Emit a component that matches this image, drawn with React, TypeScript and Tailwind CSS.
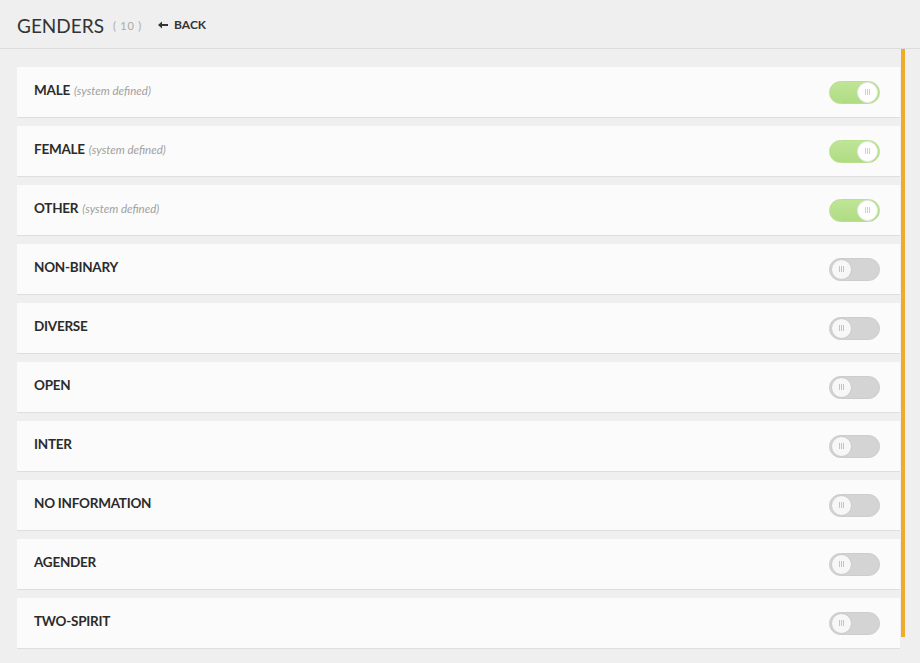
import React from "react";

const rows: { name: string; sys?: boolean; on: boolean }[] = [
  { name: "MALE", sys: true, on: true },
  { name: "FEMALE", sys: true, on: true },
  { name: "OTHER", sys: true, on: true },
  { name: "NON-BINARY", on: false },
  { name: "DIVERSE", on: false },
  { name: "OPEN", on: false },
  { name: "INTER", on: false },
  { name: "NO INFORMATION", on: false },
  { name: "AGENDER", on: false },
  { name: "TWO-SPIRIT", on: false },
];

function Grip({ on }: { on: boolean }) {
  return (
    <div className="flex gap-[1px]">
      <span className={`w-[1px] h-[6px] ${on ? "bg-[#cfcfcf]" : "bg-[#c4c4c4]"}`} />
      <span className={`w-[1px] h-[6px] ${on ? "bg-[#cfcfcf]" : "bg-[#c4c4c4]"}`} />
      <span className={`w-[1px] h-[6px] ${on ? "bg-[#cfcfcf]" : "bg-[#c4c4c4]"}`} />
    </div>
  );
}

function Toggle({ on }: { on: boolean }) {
  return (
    <div
      className={`w-[51px] h-[23px] rounded-full flex items-center p-[1px] ${
        on
          ? "justify-end bg-gradient-to-b from-[#bfe597] to-[#b0dc83] border border-[#b8e08e]"
          : "justify-start bg-[#d4d4d4] border border-[#cdcdcd]"
      }`}
    >
      <div
        className={`w-[21px] h-[21px] rounded-full flex items-center justify-center ${
          on ? "bg-white border border-[#e8e8e8]" : "bg-[#f7f7f7] border border-[#c9c9c9]"
        }`}
      >
        <Grip on={on} />
      </div>
    </div>
  );
}

export default function App() {
  return (
    <div
      className="w-[920px] h-[663px] bg-[#efefef] overflow-hidden flex flex-col"
      style={{ fontFamily: "Lato, 'Open Sans', sans-serif" }}
    >
      <div className="h-[49px] shrink-0 flex items-center pl-[17px] pt-[2px] border-b border-[#dcdcdc]">
        <span className="text-[19px] text-[#333] leading-none">GENDERS</span>
        <span className="ml-[9px] text-[11px] text-[#aaa] tracking-[0.8px] leading-none">( 10 )</span>
        <span className="ml-[16px] flex items-center gap-[6px] text-[12px] font-bold text-[#333] leading-none">
          <svg width="10" height="8" viewBox="0 0 10 8">
            <path d="M0 4 L4 0.5 L4 3 L10 3 L10 5 L4 5 L4 7.5 Z" fill="#333" />
          </svg>
          BACK
        </span>
      </div>
      <div className="flex flex-1 min-h-0">
        <div className="w-[900px] pl-[17px] pt-[18px] flex flex-col gap-[8px]">
          {rows.map((r) => (
            <div
              key={r.name}
              className="h-[51px] shrink-0 bg-[#fbfbfb] border-b border-[#dedede] flex items-center justify-between pl-[17px] pr-[20px]"
            >
              <div className="flex items-baseline gap-[4px] -mt-[4px]">
                <span className="text-[13.5px] tracking-[-0.25px] font-bold text-[#2b2b2b]">{r.name}</span>
                {r.sys && <span className="text-[11.5px] italic text-[#a0a0a0]">(system defined)</span>}
              </div>
              <Toggle on={r.on} />
            </div>
          ))}
        </div>
        <div className="w-[5px] pl-[1px]">
          <div className="w-[4px] h-[588px] bg-[#efac2b]" />
        </div>
      </div>
    </div>
  );
}
